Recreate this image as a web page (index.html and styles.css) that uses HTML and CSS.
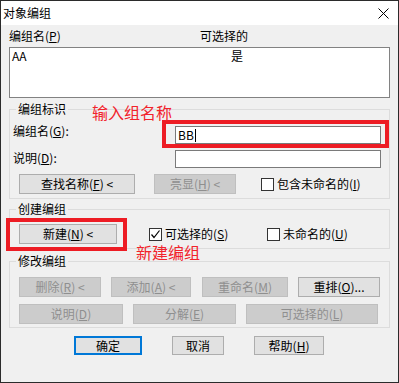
FILE: index.html
```html
<!DOCTYPE html>
<html lang="zh-CN">
<head>
<meta charset="utf-8">
<title>对象编组</title>
<link rel="stylesheet" href="styles.css">
</head>
<body>
<div class="window">
  <div class="titlebar">
    <span class="title">对象编组</span>
    <svg class="close" width="11" height="11" viewBox="0 0 11 11"><path d="M0.5 0.5 L10.5 10.5 M10.5 0.5 L0.5 10.5" stroke="#000" stroke-width="1" fill="none"/></svg>
  </div>
  <div class="content">
    <div class="list-head"><span class="hcol1">编组名(<u>P</u>)</span><span>可选择的</span></div>
    <div class="list">
      <div class="list-row"><span class="rcol1">AA</span><span>是</span></div>
    </div>

    <div class="group g1">
      <span class="group-title">编组标识</span>
      <div class="field-row r1">
        <span class="field-label">编组名(<u>G</u>):</span>
        <div class="input">BB<span class="caret"></span></div>
      </div>
      <div class="field-row r2">
        <span class="field-label">说明(<u>D</u>):</span>
        <div class="input"></div>
      </div>
      <div class="btn-row">
        <div class="btn w116">查找名称(<u>F</u>) &lt;</div>
        <div class="btn disabled w82 gap19">亮显(<u>H</u>) &lt;</div>
        <div class="check-item gap25"><span class="box"></span><span>包含未命名的(<u>I</u>)</span></div>
      </div>
    </div>

    <div class="group g2">
      <span class="group-title">创建编组</span>
      <div class="btn-row">
        <div class="btn w98">新建(<u>N</u>) &lt;</div>
        <div class="check-item cb-sel"><span class="box"><svg width="11" height="11" viewBox="0 0 11 11"><path d="M1.5 5.5 L4 8.5 L9.5 1.5" stroke="#000" stroke-width="1.2" fill="none"/></svg></span><span>可选择的(<u>S</u>)</span></div>
        <div class="check-item"><span class="box"></span><span>未命名的(<u>U</u>)</span></div>
      </div>
    </div>

    <div class="group g3">
      <span class="group-title">修改编组</span>
      <div class="btn-row">
        <div class="btn disabled w82">删除(<u>R</u>) &lt;</div>
        <div class="btn disabled w80 gap10">添加(<u>A</u>) &lt;</div>
        <div class="btn disabled w86 gap11">重命名(<u>M</u>)</div>
        <div class="btn w82 gap10">重排(<u>O</u>)...</div>
      </div>
      <div class="btn-row row2">
        <div class="btn disabled w104">说明(<u>D</u>)</div>
        <div class="btn disabled w103 gap10">分解(<u>E</u>)</div>
        <div class="btn disabled w132 gap10">可选择的(<u>L</u>)</div>
      </div>
    </div>

    <div class="dialog-buttons">
      <div class="btn default w68">确定</div>
      <div class="btn w52 gap30">取消</div>
      <div class="btn w70 gap30">帮助(<u>H</u>)</div>
    </div>
  </div>

  <div class="mark mark-name"></div>
  <div class="note note-name">输入组名称</div>
  <div class="mark mark-new"></div>
  <div class="note note-new">新建编组</div>
</div>
</body>
</html>
```

FILE: styles.css
```css
* { box-sizing: border-box; }
html, body { margin: 0; padding: 0; background: #f0f0f0; }
body {
  font-family: "Noto Sans CJK SC", "Liberation Sans", sans-serif;
  font-size: 12px;
  color: #000;
}
u { text-decoration: underline; text-underline-offset: 1px; }

.window {
  position: relative;
  width: 399px;
  height: 383px;
  border: 1px solid #2b2b2b;
  background: #f0f0f0;
}

.titlebar {
  height: 24px;
  background: #fff;
  display: flex;
  align-items: center;
  justify-content: space-between;
  padding: 0 9px 0 2px;
}
.title { font-size: 12px; line-height: 14px; }
.close { display: block; margin-top: 0; }

.content { padding: 0 8px; }

.list-head {
  height: 22px;
  line-height: 22px;
  display: flex;
}
.hcol1 { width: 191px; }

.list {
  height: 51px;
  border: 1px solid #828282;
  background: #fff;
}
.list-row {
  display: flex;
  padding: 0 0 0 2px;
  line-height: 14px;
  margin-top: 1px;
}
.rcol1 { width: 219px; }

.group {
  position: relative;
  border: 1px solid #dcdcdc;
}
.group-title {
  position: absolute;
  top: -8px;
  left: 6px;
  padding: 0 2px;
  background: #f0f0f0;
  line-height: 14px;
}
.g1 { margin-top: 11px; padding: 16px 0 4px 0; }
.g2 { margin-top: 10px; padding: 14px 0 4px 0; }
.g3 { margin-top: 12px; padding: 15px 0 3px 0; }

.field-row {
  display: flex;
  align-items: flex-start;
  height: 18px;
  padding-left: 3px;
}
.r2 { margin-top: 6px; }
.field-label { width: 162px; line-height: 14px; }
.r1 .field-label { margin-top: -2px; }
.r2 .field-label { margin-top: 1px; }
.input {
  width: 206px;
  height: 18px;
  border: 1px solid #7a7a7a;
  background: #fff;
  line-height: 16px;
  padding-left: 2px;
  display: flex;
  align-items: center;
}
.caret {
  display: inline-block;
  width: 1px;
  height: 13px;
  background: #000;
  margin-left: 1px;
}

.btn-row {
  display: flex;
  align-items: center;
  padding-left: 9px;
  margin-top: 6px;
}
.field-row + .btn-row { margin-top: 6px; }
.g2 .btn-row, .g3 .btn-row { margin-top: 0; }
.g3 .row2 { margin-top: 7px; }

.btn {
  height: 20px;
  border: 1px solid #adadad;
  background: #e1e1e1;
  display: flex;
  align-items: center;
  justify-content: center;
  line-height: 14px;
  white-space: nowrap;
}
.btn.disabled {
  background: #cccccc;
  border-color: #bfbfbf;
  color: #8f8f8f;
}
.btn.default { border: 2px solid #0078d7; }

.w52 { width: 52px; }
.w68 { width: 68px; }
.w70 { width: 70px; }
.w80 { width: 80px; }
.w82 { width: 82px; }
.w86 { width: 86px; }
.w98 { width: 98px; }
.w103 { width: 103px; }
.w104 { width: 104px; }
.w116 { width: 116px; }
.w132 { width: 132px; }
.gap10 { margin-left: 10px; }
.gap11 { margin-left: 11px; }
.gap19 { margin-left: 19px; }
.gap25 { margin-left: 25px; }
.gap30 { margin-left: 30px; }

.check-item {
  display: flex;
  align-items: center;
  line-height: 14px;
  white-space: nowrap;
}
.box {
  width: 13px;
  height: 13px;
  border: 1px solid #333;
  background: #fff;
  margin-right: 3px;
  display: flex;
  align-items: center;
  justify-content: center;
}
.box svg { display: block; }
.cb-sel { margin-left: 32px; width: 118px; }

.dialog-buttons {
  display: flex;
  margin-top: 8px;
  padding-left: 65px;
}
.dialog-buttons .btn { height: 19px; }

.mark {
  position: absolute;
  border: 4px solid #ed1c24;
}
.mark-name { left: 161px; top: 119px; width: 227px; height: 28px; }
.mark-new { left: 5px; top: 217px; width: 121px; height: 33px; }

.note {
  position: absolute;
  color: #f2232b;
  font-size: 16px;
  line-height: 18px;
  font-family: "Noto Sans CJK SC", sans-serif;
}
.note-name { left: 91px; top: 102px; }
.note-new { left: 135px; top: 242px; }
```
